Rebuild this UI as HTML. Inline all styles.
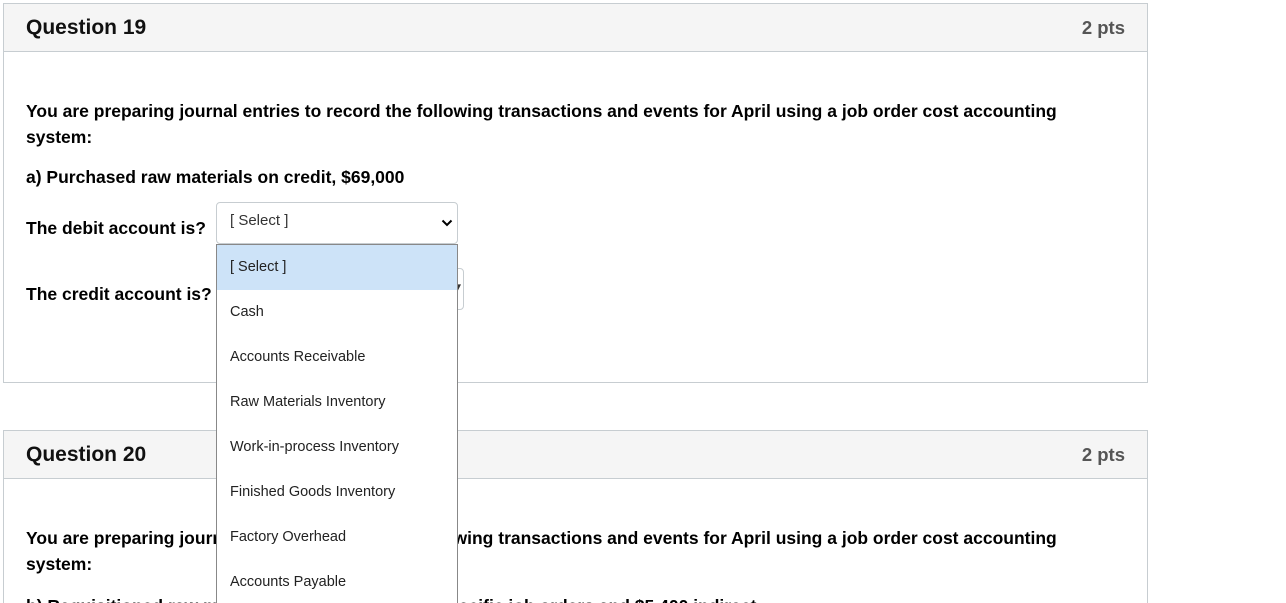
<!DOCTYPE html>
<html style="overflow:hidden;height:603px"><head><style>
body{margin:0;background:#fff;font-family:"Liberation Sans",Arial,sans-serif;width:1286px;height:603px;overflow:hidden;position:relative;color:#000}
.panel{position:absolute;left:3px;width:1143px;border:1px solid #c7cdd1;background:#fff;overflow:hidden}
.hdr{height:47px;background:#f5f5f5;border-bottom:1px solid #c7cdd1;position:relative}
.hdr .t{position:absolute;left:22px;top:12px;font-size:21px;font-weight:bold;color:#111}
.hdr .p{position:absolute;right:22px;top:13px;font-size:18.5px;font-weight:bold;color:#555}
.txt{position:absolute;left:22px;font-size:17.5px;font-weight:bold;line-height:26px;width:1045px}
.sel{position:absolute;border:1px solid #c7cdd1;border-radius:4px;background:#fff;font-family:"Liberation Sans",sans-serif;font-size:15px;color:#333}
.dd{position:absolute;left:216px;top:244px;width:240px;height:370px;border:1px solid #888;background:#fff;font-size:14.5px;color:#222}
.dd div{height:45px;line-height:45px;padding-left:13px}
</style></head><body>
<div class="panel" style="top:3px;height:378px">
 <div class="hdr"><span class="t">Question 19</span><span class="p">2 pts</span></div>
 <div class="txt" style="top:94px">You are preparing journal entries to record the following transactions and events for April using a job order cost accounting system:</div>
 <div class="txt" style="top:160px">a) Purchased raw materials on credit, $69,000</div>
 <div class="txt" style="top:211px">The debit account is?</div>
 <div class="txt" style="top:277px">The credit account is?</div>
</div>
<div class="panel" style="top:430px;height:200px">
 <div class="hdr"><span class="t">Question 20</span><span class="p">2 pts</span></div>
 <div class="txt" style="top:94px">You are preparing journal entries to record the following transactions and events for April using a job order cost accounting system:</div>
 <div class="txt" style="top:162px">b) Requisitioned raw materials, $46,500 direct for specific job orders and $5,400 indirect</div>
</div>
<div class="sel" style="left:216px;top:202px;width:240px;height:40px"><span style="position:absolute;left:13px;top:9px">[ Select ]</span>
<svg style="position:absolute;right:4px;top:15px" width="12" height="10" viewBox="0 0 12 10"><path d="M1.5 2.5 L6 7 L10.5 2.5" stroke="#000" stroke-width="2" fill="none"/></svg></div>
<div class="sel" style="left:216px;top:268px;width:246px;height:40px"><span style="position:absolute;right:2px;top:10px;font-size:13px">▾</span></div>
<div class="dd">
<div style="background:#cde3f8">[ Select ]</div>
<div>Cash</div><div>Accounts Receivable</div><div>Raw Materials Inventory</div><div>Work-in-process Inventory</div><div>Finished Goods Inventory</div><div>Factory Overhead</div><div>Accounts Payable</div>
</div>
</body></html>
